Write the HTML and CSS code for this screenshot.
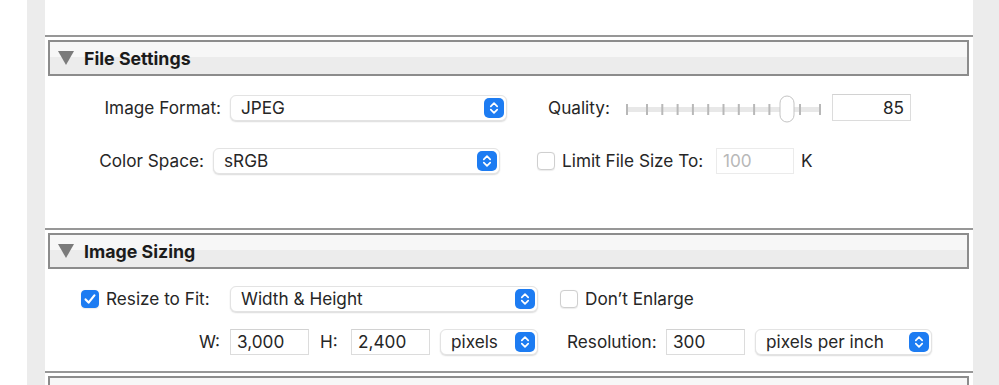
FILE: index.html
```html
<!DOCTYPE html>
<html>
<head>
<meta charset="utf-8">
<link rel="stylesheet" href="styles.css">
</head>
<body>
<div class="page">
  <div class="edge"></div>
  <div class="rail"></div>
  <div class="panel">
    <div class="top-space"></div>

    <section class="section">
      <div class="header"><span class="tri"></span><span class="title">File Settings</span></div>
      <div class="body body-1">
        <div class="row">
          <span class="lbl w176">Image Format:</span>
          <div class="select ml9 w277"><span class="sel-text">JPEG</span><svg class="stepper" viewBox="0 0 20 20" width="20" height="20"><rect width="20" height="20" rx="5" fill="#1d7cf2"/><path d="M6.8 8.3 L10 5.2 L13.2 8.3 M6.8 11.7 L10 14.8 L13.2 11.7" fill="none" stroke="#fff" stroke-width="1.7" stroke-linecap="round" stroke-linejoin="round"/></svg></div>
          <span class="txt ml41 w77">Quality:</span>
          <svg class="slider" width="196" height="30" viewBox="0 0 196 30">
            <rect x="1" y="14" width="194" height="5" fill="#e8e8e8"/>
            <g stroke="#b8b8b8" stroke-width="2">
              <line x1="2" y1="11" x2="2" y2="22"/>
              <line x1="22" y1="11" x2="22" y2="22"/>
              <line x1="37.3" y1="11" x2="37.3" y2="22"/>
              <line x1="52.6" y1="11" x2="52.6" y2="22"/>
              <line x1="67.9" y1="11" x2="67.9" y2="22"/>
              <line x1="83.2" y1="11" x2="83.2" y2="22"/>
              <line x1="98.5" y1="11" x2="98.5" y2="22"/>
              <line x1="113.8" y1="11" x2="113.8" y2="22"/>
              <line x1="129.1" y1="11" x2="129.1" y2="22"/>
              <line x1="144.4" y1="11" x2="144.4" y2="22"/>
              <line x1="175" y1="11" x2="175" y2="22"/>
              <line x1="195" y1="11" x2="195" y2="22"/>
            </g>
            <rect x="155" y="3" width="14" height="26" rx="7" fill="#fff" stroke="#c4c4c4" stroke-width="1"/>
          </svg>
          <div class="input ml11 w79 right">85</div>
        </div>
        <div class="row mt26">
          <span class="lbl w159">Color Space:</span>
          <div class="select ml9 w287"><span class="sel-text">sRGB</span><svg class="stepper" viewBox="0 0 20 20" width="20" height="20"><rect width="20" height="20" rx="5" fill="#1d7cf2"/><path d="M6.8 8.3 L10 5.2 L13.2 8.3 M6.8 11.7 L10 14.8 L13.2 11.7" fill="none" stroke="#fff" stroke-width="1.7" stroke-linecap="round" stroke-linejoin="round"/></svg></div>
          <span class="check ml37"></span>
          <span class="txt ml7 w154">Limit File Size To:</span>
          <div class="input w78 disabled">100</div>
          <span class="txt ml7">K</span>
        </div>
      </div>
    </section>

    <section class="section">
      <div class="header"><span class="tri"></span><span class="title">Image Sizing</span></div>
      <div class="body body-2">
        <div class="row">
          <span class="check checked ml36"><svg viewBox="0 0 18 18" width="18" height="18"><path d="M4.6 9.4 L7.6 12.6 L13.4 5.4" fill="none" stroke="#fff" stroke-width="2.2" stroke-linecap="round" stroke-linejoin="round"/></svg></span>
          <span class="txt ml7 w124">Resize to Fit:</span>
          <div class="select w308"><span class="sel-text">Width &amp; Height</span><svg class="stepper" viewBox="0 0 20 20" width="20" height="20"><rect width="20" height="20" rx="5" fill="#1d7cf2"/><path d="M6.8 8.3 L10 5.2 L13.2 8.3 M6.8 11.7 L10 14.8 L13.2 11.7" fill="none" stroke="#fff" stroke-width="1.7" stroke-linecap="round" stroke-linejoin="round"/></svg></div>
          <span class="check ml22"></span>
          <span class="txt ml7">Don’t Enlarge</span>
        </div>
        <div class="row mt16">
          <span class="lbl w175">W:</span>
          <div class="input ml10 w79">3,000</div>
          <span class="txt ml11 w31">H:</span>
          <div class="input w79">2,400</div>
          <div class="select ml10 w98"><span class="sel-text">pixels</span><svg class="stepper" viewBox="0 0 20 20" width="20" height="20"><rect width="20" height="20" rx="5" fill="#1d7cf2"/><path d="M6.8 8.3 L10 5.2 L13.2 8.3 M6.8 11.7 L10 14.8 L13.2 11.7" fill="none" stroke="#fff" stroke-width="1.7" stroke-linecap="round" stroke-linejoin="round"/></svg></div>
          <span class="txt ml29 w99">Resolution:</span>
          <div class="input w79">300</div>
          <div class="select ml10 w177"><span class="sel-text">pixels per inch</span><svg class="stepper" viewBox="0 0 20 20" width="20" height="20"><rect width="20" height="20" rx="5" fill="#1d7cf2"/><path d="M6.8 8.3 L10 5.2 L13.2 8.3 M6.8 11.7 L10 14.8 L13.2 11.7" fill="none" stroke="#fff" stroke-width="1.7" stroke-linecap="round" stroke-linejoin="round"/></svg></div>
        </div>
      </div>
    </section>

    <section class="section">
      <div class="header"></div>
    </section>
  </div>
  <div class="rail rail-right"></div>
</div>
</body>
</html>
```

FILE: styles.css
```css
* { box-sizing: border-box; }
html, body { margin: 0; padding: 0; background: #fff; }
body {
  font-family: "Inter", "Helvetica Neue", "Liberation Sans", sans-serif;
  font-size: 17.2px;
  color: #262626;
}
.page {
  display: flex;
  width: 999px;
  height: 385px;
  overflow: hidden;
}
.edge { width: 27px; background: #fff; flex: none; }
.rail { width: 18px; background: #ececec; flex: none; }
.rail-right { width: 26px; }
.panel { width: 928px; flex: none; background: #fff; }
.top-space { height: 35px; }
.section { border-top: 2px solid #979797; }
.header {
  margin: 3px 4px 0 3px;
  height: 36px;
  border: 2px solid #8c8c8c;
  background: linear-gradient(#f7f7f7 0, #f7f7f7 46%, #ececec 46%, #ececec 100%);
  display: flex;
  align-items: center;
}
.tri {
  width: 0; height: 0;
  margin-left: 8px;
  border-left: 8px solid transparent;
  border-right: 8px solid transparent;
  border-top: 14px solid #7b7b7b;
}
.title {
  margin-left: 10px;
  font-weight: 700;
  font-size: 17.8px;
  color: #1b1b1b;
}
.body-1 { padding: 18px 0 54px; }
.body-2 { padding: 16px 0 16px; }
.row { display: flex; align-items: center; height: 27px; }
.mt26 { margin-top: 26px; }
.mt16 { margin-top: 16px; }
.lbl { text-align: right; flex: none; white-space: nowrap; }
.txt { flex: none; white-space: nowrap; }
.w176 { width: 176px; } .w159 { width: 159px; } .w175 { width: 175px; }
.w277 { width: 277px; } .w287 { width: 287px; } .w308 { width: 308px; }
.w98 { width: 98px; } .w177 { width: 177px; }
.w77 { width: 77px; } .w79 { width: 79px; } .w78 { width: 78px; }
.w154 { width: 154px; } .w124 { width: 124px; } .w31 { width: 31px; } .w99 { width: 99px; }
.ml7 { margin-left: 7px; } .ml9 { margin-left: 9px; } .ml10 { margin-left: 10px; }
.ml11 { margin-left: 11px; } .ml22 { margin-left: 22px; } .ml29 { margin-left: 29px; }
.ml36 { margin-left: 36px; } .ml37 { margin-left: 37px; } .ml41 { margin-left: 41px; }
.select {
  flex: none;
  height: 26px;
  border-radius: 6px;
  background: #fff;
  border: 1px solid #e3e3e3;
  box-shadow: 0 1px 1.5px rgba(0,0,0,0.14);
  display: flex;
  align-items: center;
  justify-content: space-between;
  padding: 0 2px 0 10px;
}
.sel-text { white-space: nowrap; }
.stepper { display: block; flex: none; }
.slider { display: block; flex: none; }
.input {
  flex: none;
  height: 26px;
  border: 1px solid #dcdcdc;
  border-top-color: #d2d2d2;
  background: #fff;
  padding: 0 6px;
  display: flex;
  align-items: center;
  white-space: nowrap;
}
.input.right { justify-content: flex-end; height: 27px; }
.input.disabled { color: #b8b8b8; border-color: #ebebeb; }
.check {
  flex: none;
  width: 18px; height: 18px;
  border-radius: 4px;
  border: 1px solid #cfcfcf;
  background: #fff;
  box-shadow: 0 0.5px 1px rgba(0,0,0,0.08);
  display: flex;
}
.check.checked { background: #1d7cf2; border-color: #1d7cf2; }
.check svg { display: block; margin: -1px; }
```
